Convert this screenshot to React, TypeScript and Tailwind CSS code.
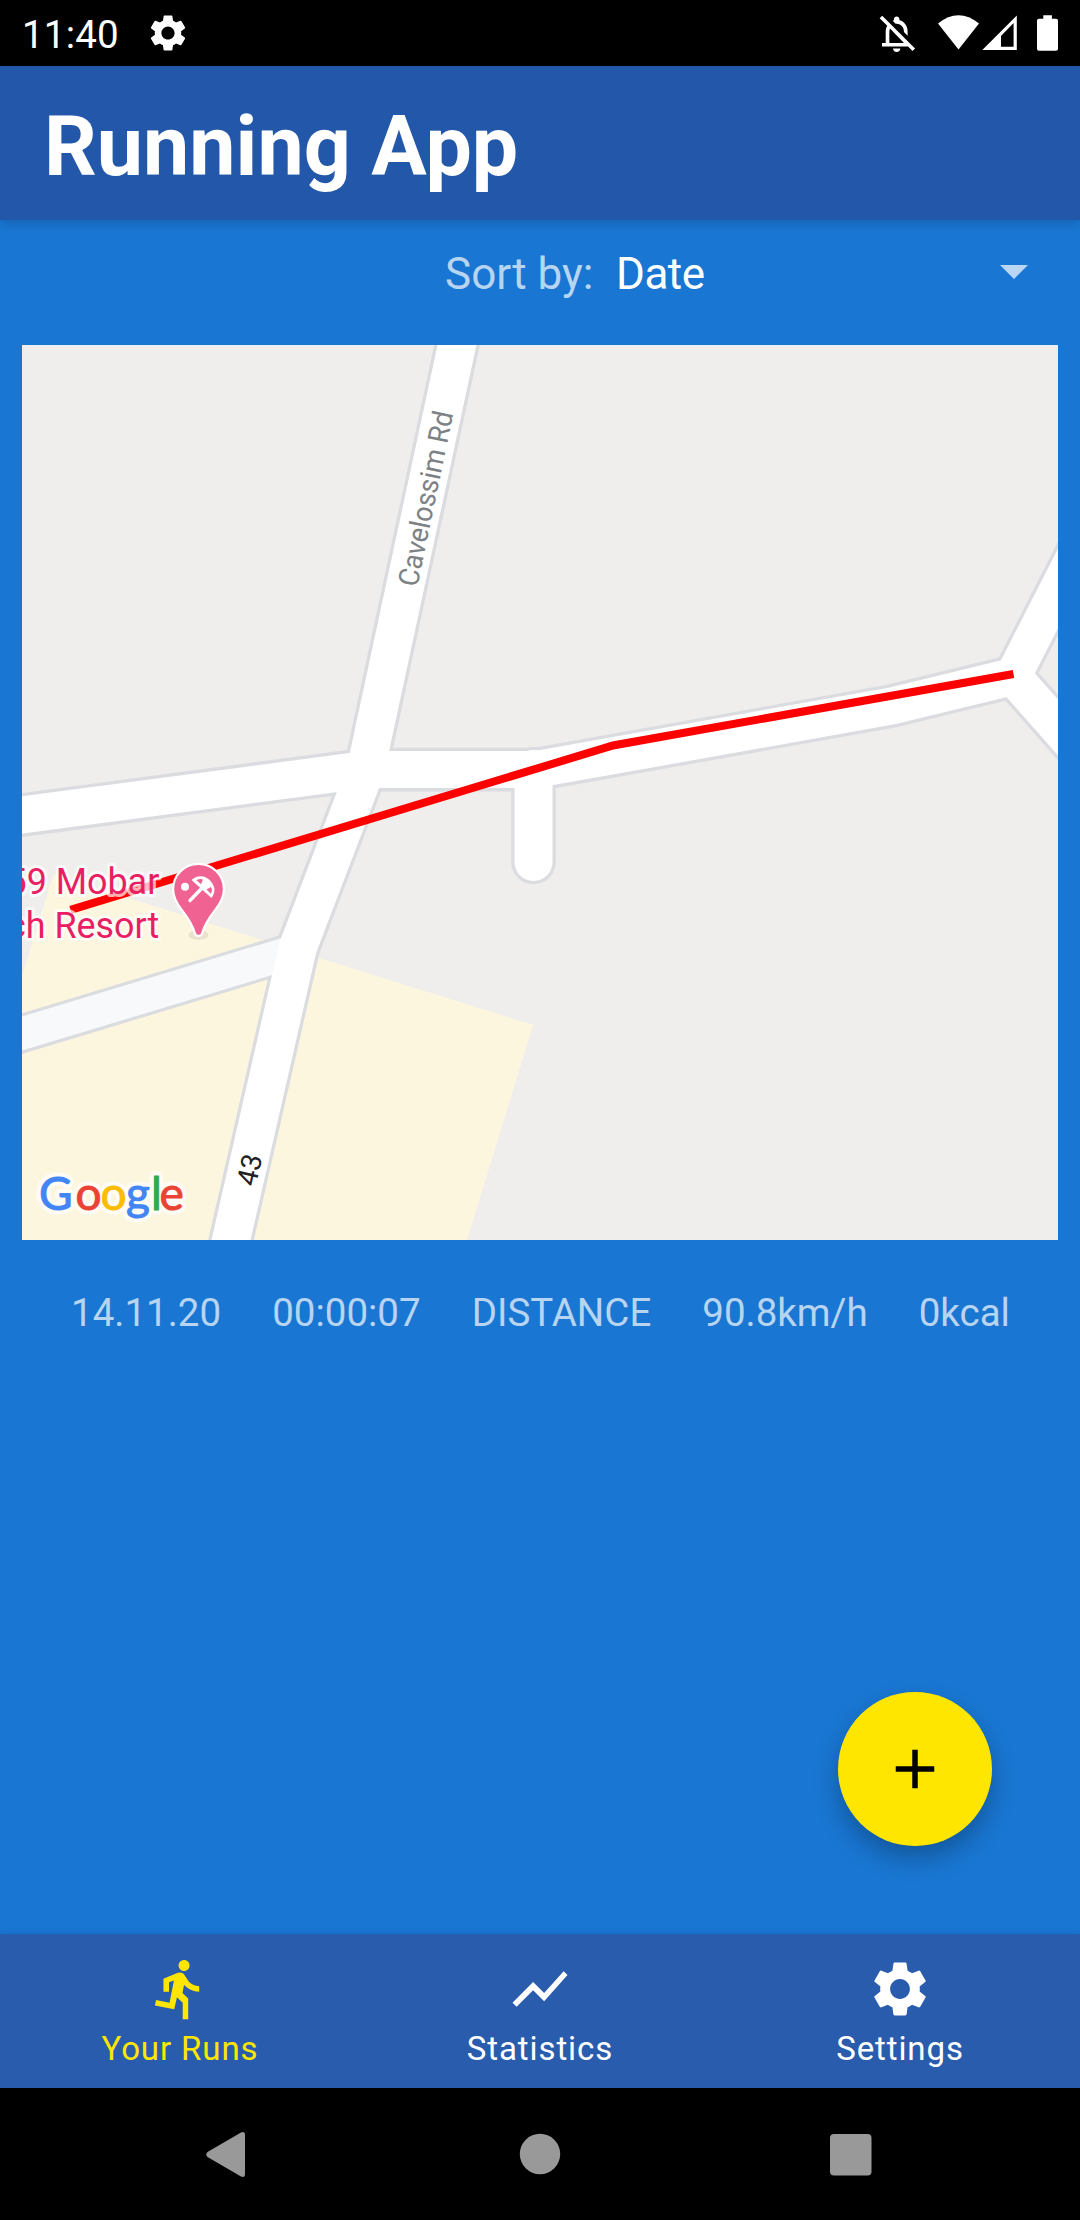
import React from "react";
import { MdDirectionsRun, MdSettings, MdShowChart } from "react-icons/md";

const roads = {
  main: "M470 285 L457 345 L365.6 770 L298 947 L276.7 1040 L231 1240 L217 1300",
  cross: "M-18 820 L22 815 L365.6 769.6 L535 769.6 L892 706 L1013 676.500 L1100 775",
  northEast: "M1013 676.500 L1100 506",
  stub: "M533.5 769 L533.5 862",
  lane: "M-18 1045.6 L290 952.6",
};

const wordmark = [
  { x: 39, letter: "G", color: "#4285f4" },
  { x: 75.5, letter: "o", color: "#ea4335" },
  { x: 100.5, letter: "o", color: "#fbbc04" },
  { x: 126, letter: "g", color: "#4285f4" },
  { x: 151, letter: "l", color: "#34a853" },
  { x: 159.5, letter: "e", color: "#ea4335" },
];

function StatusBar() {
  return (
    <div className="flex h-[66px] shrink-0 items-center justify-between bg-black pr-[10px] text-white">
      <div className="flex items-center pl-[22px]">
        <span className="w-[124px] pt-[4px] text-[38.5px] leading-[46px] tracking-[0.2px]">11:40</span>
        <MdSettings className="size-[44px]" />
      </div>
      <svg width="200" height="66" viewBox="870 0 200 66" className="block" fill="#fff">
        <g transform="translate(874.7 11.8) scale(1.83)">
          <path d="M12 22c1.1 0 2-.9 2-2h-4c0 1.1.9 2 2 2z" />
          <path d="M12 6.5c2.49 0 4 2.02 4 4.5v.1l2 2V11c0-3.07-1.63-5.64-4.5-6.32V4c0-.83-.67-1.5-1.5-1.5s-1.5.67-1.5 1.5v.68c-.24.06-.47.15-.69.23l1.64 1.64c.18-.02.36-.05.55-.05z" />
          <path d="M4.1 2.1 2.7 3.5l4.15 4.15C6.3 8.6 6 9.74 6 11v6H4v2h14.24l2.4 2.4 1.41-1.41zM16 17H8v-6c0-.68.12-1.32.34-1.9z" />
        </g>
        <path d="M938 23.5 Q958.5 7 979 23.5 L958.5 49.5 Z" />
        <path fillRule="evenodd" d="M1016.8 15.5 V50 H982.3 Z M1013.6 23 L1001 36 V46.7 H1013.6 Z" />
        <path d="M1043.3 15.3h8.6v3.5h4.1q2 0 2 2v28q0 2-2 2h-17q-2 0-2-2v-28q0-2 2-2h4.3z" />
      </svg>
    </div>
  );
}

function MapCard() {
  return (
    <svg width="1036" height="895" viewBox="22 345 1036 895" className="ml-[22px] block shrink-0 font-['Roboto',sans-serif]">
      <rect x="22" y="345" width="1036" height="895" fill="#efeeec" />
      <path d="M53.3 874.5 L533 1025 L467 1240 H22 V977 Z" fill="#fdf6df" />
      <g fill="none" stroke="#dadce0" strokeWidth="44.600">
        <path d={roads.lane} strokeWidth="39" />
        <path d={roads.main} />
        <path d={roads.cross} strokeWidth="43.600" />
        <path d={roads.northEast} strokeWidth="42.600" />
        <path d={roads.stub} strokeLinecap="round" />
      </g>
      <path d={roads.lane} fill="none" stroke="#f8f9fb" strokeWidth="32.600" />
      <g fill="none" stroke="#fff" strokeWidth="38">
        <path d={roads.main} />
        <path d={roads.cross} strokeWidth="37" />
        <path d={roads.northEast} strokeWidth="36" />
        <path d={roads.stub} strokeLinecap="round" />
      </g>
      <path d="M70.5 909.8 L613 745.5 L1013.5 674" fill="none" stroke="#ff0000" strokeWidth="8" />

      <text transform="translate(425.500 498.5) rotate(-78.3) scale(0.950 1)" textAnchor="middle" dy="10" fontSize="28.5" fill="#7c8285">
        Cavelossim Rd
      </text>
      <text transform="translate(249.3 1169.7) rotate(-77)" textAnchor="middle" dy="10" fontSize="28" fill="#202124">
        43
      </text>

      {/* Place label, anchored on its right edge next to the pin */}
      <g
        transform="translate(159.300 0) scale(0.970 1)"
        fontSize="37"
        fill="#e91e63"
        stroke="#fff"
        strokeOpacity="0.700"
        strokeWidth="6"
        strokeLinejoin="round"
        textAnchor="end"
        style={{ paintOrder: "stroke" }}
      >
        <text y="894.3">59 Mobar</text>
        <text y="937.7">ch Resort</text>
      </g>

      {/* Beach resort pin */}
      <ellipse cx="198.500" cy="935" rx="10" ry="5" fill="#000" opacity="0.080" />
      <path
        d="M198.5 863.800 a25.4 25.4 0 0 1 25.4 25.4 c0 8-3.5 14-8.5 20.5 c-7 9-11 15-13.2 23.5 c-.9 3.6-6.5 3.6-7.4 0 c-2.200-8.500-6.200-14.500-13.200-23.500 c-5-6.500-8.500-12.500-8.500-20.500 a25.4 25.4 0 0 1 25.4-25.4z"
        fill="#f06292"
        stroke="#fff"
        strokeWidth="2.200"
      />
      <circle cx="185" cy="886.8" r="4" fill="#fff" />
      <path d="M190 900.5 L205.5 884.5" stroke="#fff" strokeWidth="3.400" strokeLinecap="round" />
      <path d="M191.5 880 C194 877.500 197 876.200 200.500 876.200 C207 875.500 214 883 214.500 889 C214.500 893 213 896 211.500 898 Z" fill="#fff" />
      <path d="M196.500 880.300 Q199.500 878.300 203 879.500 L201 884.200 Z M206.500 889.500 L211 887 Q213 890.500 210.800 893.700 Z" fill="#f06292" />

      {/* Map attribution: halo pass first, coloured letters on top */}
      <g className="font-['Lato',sans-serif]" fontSize="46" strokeLinejoin="round">
        <text y="1209.5" fill="#fff" stroke="#fff" strokeWidth="9" opacity="0.700">
          {wordmark.map(({ x, letter }) => (
            <tspan key={x} x={x}>{letter}</tspan>
          ))}
        </text>
        <text y="1209.5" strokeWidth="1">
          {wordmark.map(({ x, letter, color }) => (
            <tspan key={x} x={x} fill={color} stroke={color}>{letter}</tspan>
          ))}
        </text>
      </g>
    </svg>
  );
}

const tabs = [
  { label: "Your Runs", Icon: MdDirectionsRun, tone: "text-[#ffe600]" },
  { label: "Statistics", Icon: MdShowChart, tone: "text-white" },
  { label: "Settings", Icon: MdSettings, tone: "text-white" },
];

export default function App() {
  return (
    <div className="flex h-[2220px] w-[1080px] flex-col overflow-hidden bg-[#1976d2] font-['Roboto',sans-serif]">
      <StatusBar />
      <header className="flex h-[154px] shrink-0 items-center bg-[#2257a9] pt-[7px] pl-[44px] shadow-[0_3px_10px_rgba(0,0,0,0.16)]">
        <h1 className="text-[82.5px] leading-[97px] font-bold text-white">Running App</h1>
      </header>

      <main className="relative flex flex-1 flex-col">
        <div className="flex h-[125px] shrink-0 items-start pt-[28px] pl-[445px] text-[44px] leading-[52px]">
          <span className="w-[171px] text-white/70">Sort by:</span>
          <span className="tracking-[-0.5px] text-white">Date</span>
          <svg width="28" height="14" viewBox="0 0 28 14" className="mt-[17px] mr-[52px] ml-auto">
            <path d="M0 0h28L14 14z" fill="#bad6f2" />
          </svg>
        </div>

        <MapCard />

        <div className="flex justify-between pt-[50px] pr-[70px] pl-[71px] text-[38.5px] leading-[46px] text-white/70">
          <span>14.11.20</span>
          <span>00:00:07</span>
          <span>DISTANCE</span>
          <span>90.8km/h</span>
          <span>0kcal</span>
        </div>

        <button className="absolute right-[88px] bottom-[88px] flex size-[154px] items-center justify-center rounded-full bg-[#ffe600] shadow-[0_12px_24px_rgba(0,0,0,0.26)]">
          <svg width="66" height="66" viewBox="0 0 24 24">
            <path d="M19 13h-6v6h-2v-6H5v-2h6V5h2v6h6v2z" />
          </svg>
        </button>
      </main>

      <nav className="grid h-[154px] shrink-0 grid-cols-3 bg-[#2a5cae] shadow-[0_-2px_6px_rgba(0,0,0,0.06)]">
        {tabs.map(({ label, Icon, tone }) => (
          <div key={label} className={`flex flex-col items-center gap-[8px] pt-[22px] ${tone}`}>
            <Icon className="size-[66px]" />
            <span className="text-[33px] leading-[38px] tracking-[0.9px]">{label}</span>
          </div>
        ))}
      </nav>

      <div className="flex h-[132px] shrink-0 items-center bg-black">
        <svg width="1080" height="132" viewBox="0 2088 1080 132" fill="#999">
          <path d="M207.500 2152 L241 2132.500 Q245 2131 245 2135 V2174 Q245 2178 241 2176.500 L207.500 2157 Q205 2154.500 207.500 2152 Z" />
          <circle cx="540" cy="2154" r="20.200" />
          <rect x="830" y="2134" width="41.500" height="41.500" rx="4" />
        </svg>
      </div>
    </div>
  );
}
